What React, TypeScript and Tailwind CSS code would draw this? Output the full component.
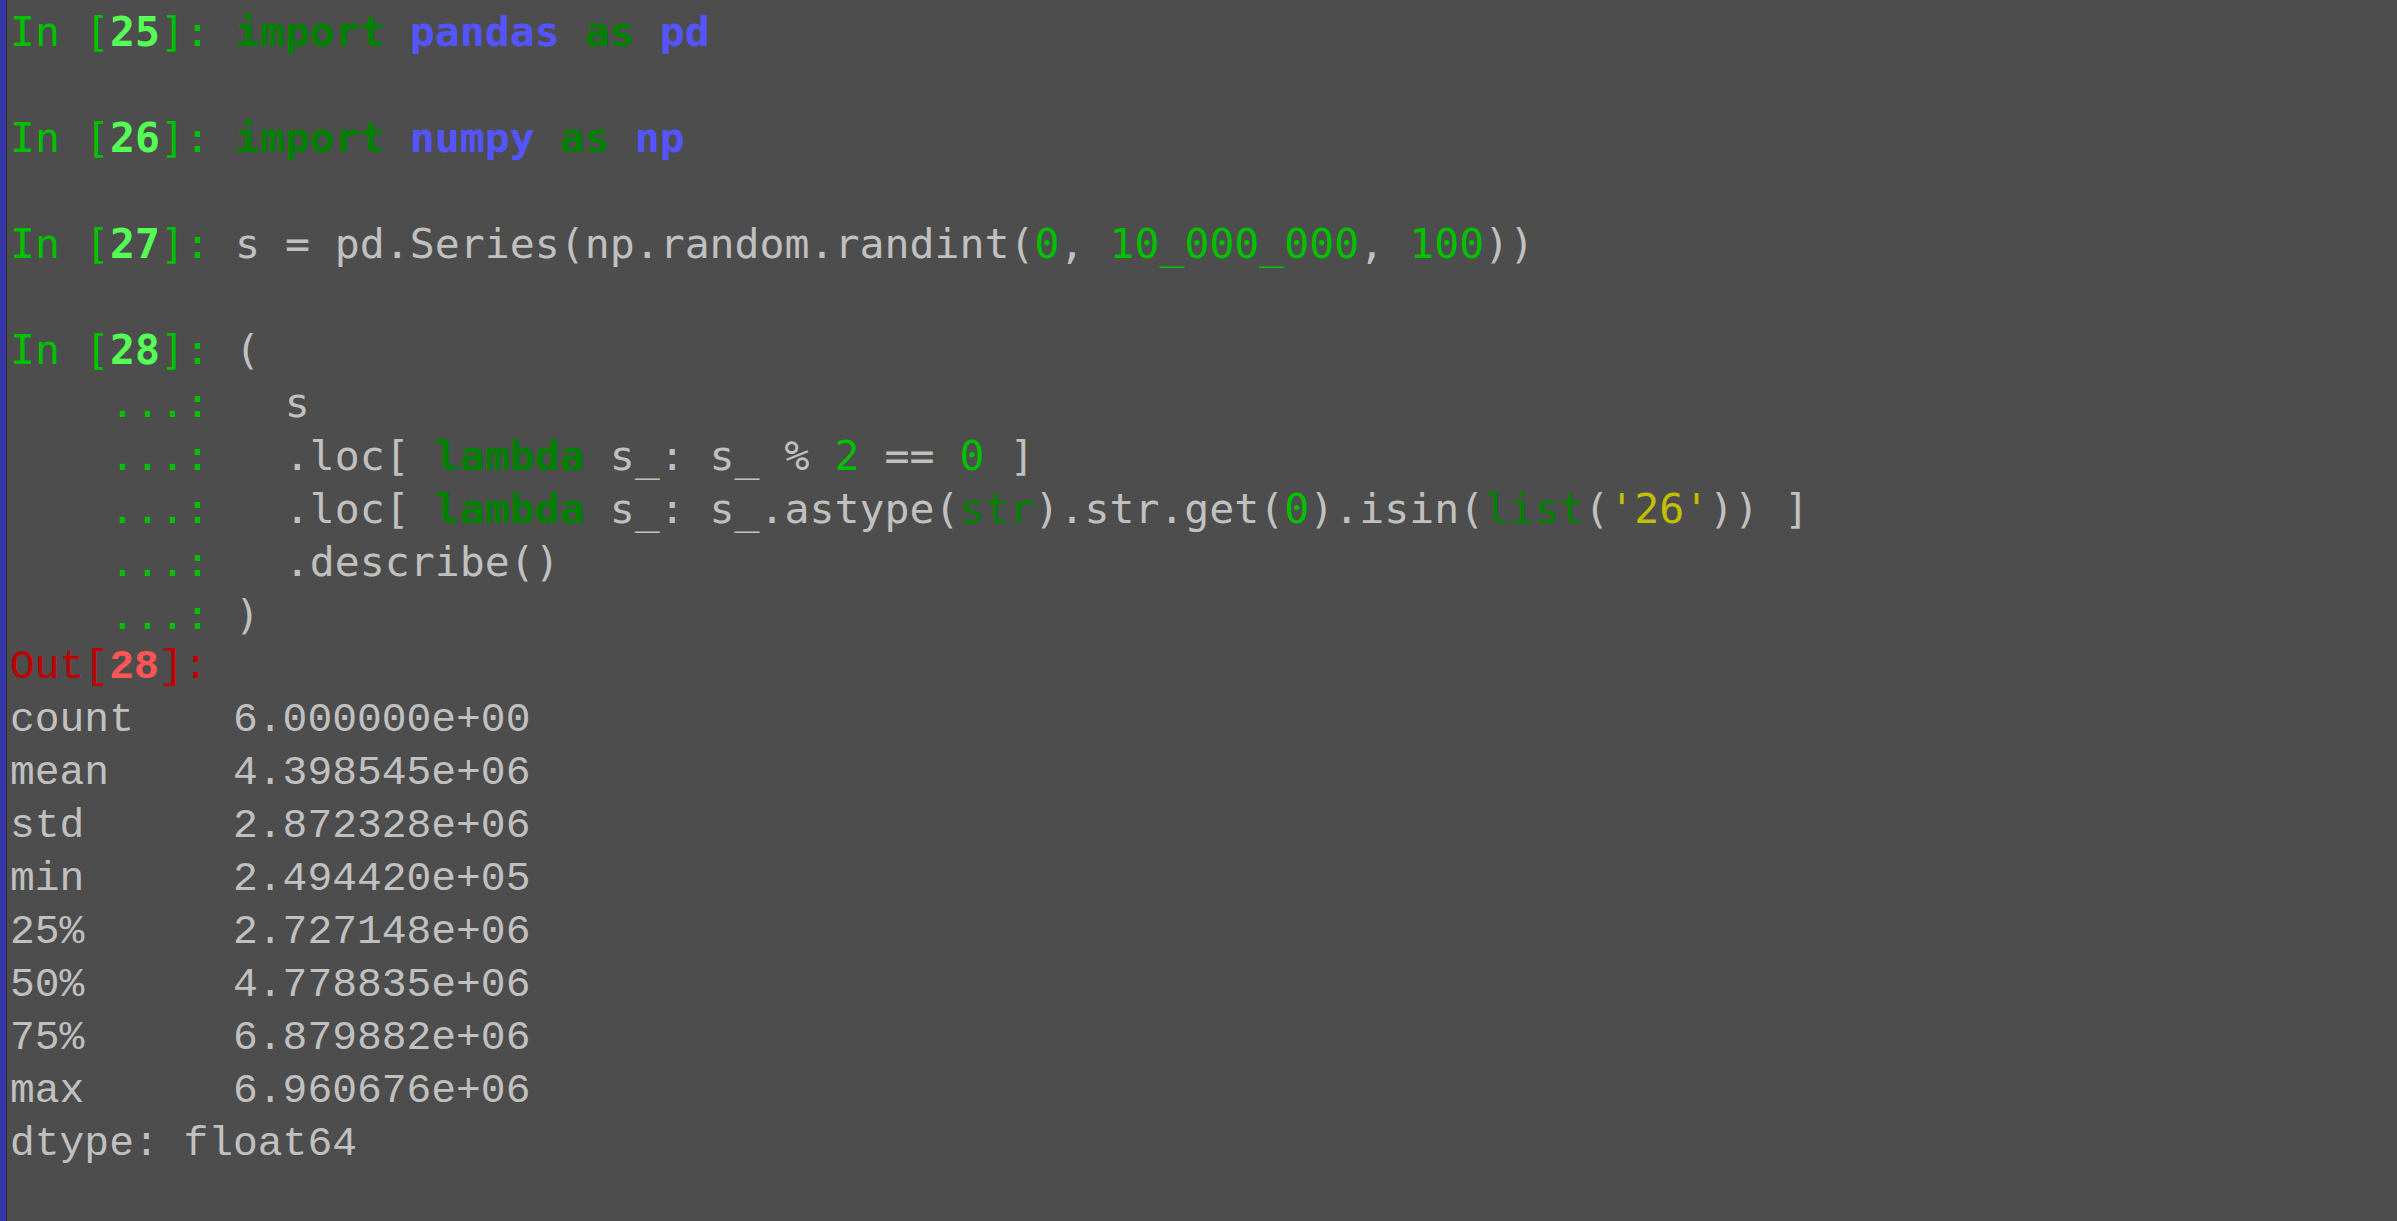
import React from "react";

const G = "text-[#00c000]";
const KW = "text-[#008000] font-bold";
const NS = "text-[#5555ff] font-bold";
const NUM = "text-[#00c000]";
const BI = "text-[#008000]";
const STR = "text-[#c0c000]";

function InPrompt({ n }: { n: number }) {
    return (
        <>
            <span className={G}>In [</span>
            <span className="text-[#55ff55] font-bold">{n}</span>
            <span className={G}>]: </span>
        </>
    );
}

function Cont() {
    return <span className={G}>{"    ...: "}</span>;
}

const stats: [string, string][] = [
    ["count", "6.000000e+00"],
    ["mean", "4.398545e+06"],
    ["std", "2.872328e+06"],
    ["min", "2.494420e+05"],
    ["25%", "2.727148e+06"],
    ["50%", "4.778835e+06"],
    ["75%", "6.879882e+06"],
    ["max", "6.960676e+06"],
];

export default function App() {
    return (
        <div className="h-[1221px] w-full bg-[#4d4d4d] flex overflow-hidden">
            <div className="w-[6px] bg-[#3535a5] shrink-0" />
            <div className="w-px bg-[#2e2e3a] shrink-0" />
            <div className="flex-1 pl-[3px] pt-[5px] text-[#c0c0c0] leading-[53px] whitespace-pre">
                <div className="font-['DejaVu_Sans_Mono',monospace] text-[41.5px]">
                    <div>
                        <InPrompt n={25} />
                        <span className={KW}>import</span> <span className={NS}>pandas</span>{" "}
                        <span className={KW}>as</span> <span className={NS}>pd</span>
                    </div>
                    <div>&nbsp;</div>
                    <div>
                        <InPrompt n={26} />
                        <span className={KW}>import</span> <span className={NS}>numpy</span>{" "}
                        <span className={KW}>as</span> <span className={NS}>np</span>
                    </div>
                    <div>&nbsp;</div>
                    <div>
                        <InPrompt n={27} />
                        s = pd.Series(np.random.randint(<span className={NUM}>0</span>,{" "}
                        <span className={NUM}>10_000_000</span>, <span className={NUM}>100</span>))
                    </div>
                    <div>&nbsp;</div>
                    <div>
                        <InPrompt n={28} />(
                    </div>
                    <div>
                        <Cont />
                        {"  s"}
                    </div>
                    <div>
                        <Cont />
                        {"  .loc[ "}
                        <span className={KW}>lambda</span> s_: s_ % <span className={NUM}>2</span> =={" "}
                        <span className={NUM}>0</span> ]
                    </div>
                    <div>
                        <Cont />
                        {"  .loc[ "}
                        <span className={KW}>lambda</span> s_: s_.astype(<span className={BI}>str</span>
                        ).str.get(<span className={NUM}>0</span>).isin(<span className={BI}>list</span>(
                        <span className={STR}>'26'</span>)) ]
                    </div>
                    <div>
                        <Cont />
                        {"  .describe()"}
                    </div>
                    <div>
                        <Cont />)
                    </div>
                </div>
                <div className="font-['Liberation_Mono',monospace] text-[41.3px]">
                    <div>
                        <span className="text-[#c00000]">Out[</span>
                        <span className="text-[#ff5555] font-bold">28</span>
                        <span className="text-[#c00000]">]:</span>
                    </div>
                    {stats.map(([k, v]) => (
                        <div key={k}>{k.padEnd(9, " ") + v}</div>
                    ))}
                    <div>dtype: float64</div>
                </div>
            </div>
        </div>
    );
}
